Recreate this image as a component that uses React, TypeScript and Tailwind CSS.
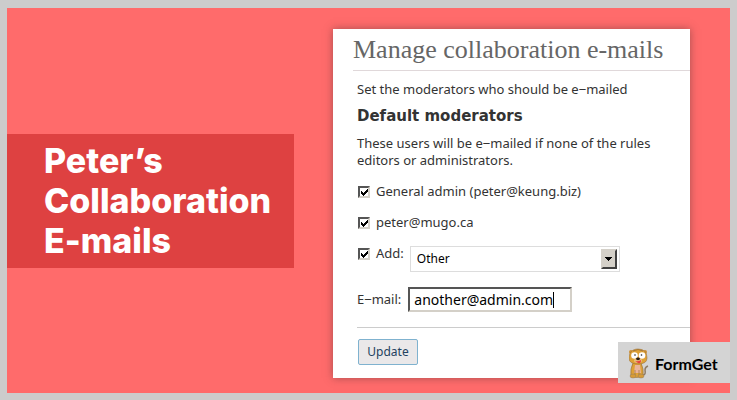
import { useState } from "react"

function Checkbox({ id }: { id: string }) {
  return (
    <span className="grid size-[12px] shrink-0">
      <input
        id={id}
        type="checkbox"
        defaultChecked
        className="peer col-start-1 row-start-1 size-[12px] appearance-none border-2 border-t-[#555] border-l-[#555] border-r-[#d4d0c8] border-b-[#d4d0c8] bg-white"
      />
      <svg
        viewBox="0 0 12 12"
        shapeRendering="crispEdges"
        className="pointer-events-none invisible col-start-1 row-start-1 size-[12px] peer-checked:visible"
      >
        <path
          d="M3 5h1v3h-1zM4 6h1v3h-1zM5 7h1v3h-1zM6 6h1v3h-1zM7 5h1v3h-1zM8 4h1v3h-1zM9 3h1v3h-1z"
          fill="#000"
        />
      </svg>
    </span>
  )
}

function Mascot() {
  return (
    <svg viewBox="0 0 20 32" className="h-[32px] w-[20px] shrink-0">
      <path d="M14 27q3 0 2-5q0-3 3-4" fill="none" stroke="#8f7c66" strokeWidth="1.500" />
      <path d="M4 15Q1 21 2 28q5 3 12 0q1-7-2-13z" fill="#dfa134" stroke="#9a7440" strokeWidth=".7" />
      <path d="M6 17h5l1 8H5z" fill="#eab49a" />
      <path d="M6 22v6M10 22v6" stroke="#9a7440" strokeWidth=".7" />
      <ellipse cx="4" cy="28" rx="3" ry="2" fill="#d79b36" stroke="#8f7c66" strokeWidth=".5" />
      <ellipse cx="12" cy="28" rx="3" ry="2" fill="#d79b36" stroke="#8f7c66" strokeWidth=".5" />
      <circle cx="2" cy="4" r="2" fill="#cf8e32" />
      <circle cx="16" cy="4" r="2" fill="#cf8e32" />
      <path d="M9 1C3 1 0 5 0 10q0 6 9 6T18 10q0-9-9-9z" fill="#dfa134" stroke="#9a7440" strokeWidth=".6" />
      <path d="M4 3q5-3 10 0" fill="none" stroke="#a87836" />
      <ellipse cx="5.500" cy="7.500" rx="3.300" ry="3.200" fill="#fff" />
      <ellipse cx="13" cy="7.500" rx="3.300" ry="3.200" fill="#fff" />
      <circle cx="6" cy="7" r=".8" fill="#222" />
      <circle cx="12.500" cy="7" r=".8" fill="#222" />
      <ellipse cx="9" cy="12.500" rx="4" ry="2.500" fill="#e9bd79" />
      <ellipse cx="9" cy="10.800" rx="2" ry="1.400" fill="#281b14" />
      <path d="M6 13q3 1 6-1q0 4-3 3z" fill="#e83f3f" />
    </svg>
  )
}

export default function App() {
  const [email, setEmail] = useState("another@admin.com")

  return (
    <div className="relative flex min-h-screen flex-col bg-[#ccc] px-[7px] pt-2 pb-[7px]">
      <main className="flex flex-1 items-start bg-[#ff6b6b] pt-[21px] pr-10 pb-[15px]">
        <div className="mr-[39px] mb-[6px] flex-1 self-center bg-[#de4141] py-[7px] pl-[37px]">
          <h1 className="font-['Inter',sans-serif] text-[34px] leading-[40px] font-extrabold text-white">
            Peter’s
            <br />
            Collaboration
            <br />
            E-mails
          </h1>
        </div>

        <form
          onSubmit={e => e.preventDefault()}
          className="w-[357px] bg-white pb-[13px] pl-5 font-['Noto_Sans',sans-serif] text-[13px] leading-[17px] text-[#333] shadow-[0_0_8px_rgba(80,50,50,0.5)]"
        >
          <h2 className="border-b border-[#e0d8da] font-['Liberation_Serif',serif] text-[26px] leading-[41px] text-[#666]">
            Manage collaboration e-mails
          </h2>

          <div className="pl-1">
            <p className="mt-[10px]">Set the moderators who should be e‒mailed</p>
            <h3 className="mt-2 font-['DejaVu_Sans',sans-serif] text-[15px] leading-5 font-bold">Default moderators</h3>
            <p className="mt-[9px]">
              These users will be e‒mailed if none of the rules
              <br />
              editors or administrators.
            </p>

            <div className="mt-[14px] flex items-center gap-[6px] pl-px">
              <Checkbox id="general" />
              <label htmlFor="general">General admin (peter@keung.biz)</label>
            </div>
            <div className="mt-[14px] flex items-center gap-[6px] pl-px">
              <Checkbox id="peter" />
              <label htmlFor="peter">peter@mugo.ca</label>
            </div>

            <div className="mt-[14px] flex items-start pl-px">
              <div className="flex items-center gap-[6px]">
                <Checkbox id="add" />
                <label htmlFor="add">Add:</label>
              </div>
              <div className="ml-[6px] grid w-[210px] items-center pt-px">
                <select
                  aria-label="Moderator to add"
                  className="col-start-1 row-start-1 h-[26px] w-full appearance-none border border-[#ddd] bg-white pl-[6px] text-xs text-black"
                >
                  <option>Other</option>
                </select>
                <span className="pointer-events-none col-start-1 row-start-1 mr-[3px] grid h-5 w-4 place-items-center justify-self-end border-2 border-t-[#d4d0c8] border-r-[#404040] border-b-[#404040] border-l-[#d4d0c8] bg-[#d4d0c8]">
                  <svg viewBox="0 0 7 4" shapeRendering="crispEdges" className="h-[4px] w-[7px]">
                    <path d="M0 0h7v1H0zM1 1h5v1H1zM2 2h3v1H2zM3 3h1v1H3z" />
                  </svg>
                </span>
              </div>
            </div>

            <div className="mt-[15px] flex items-center gap-[7px]">
              <label htmlFor="email">E‒mail:</label>
              <span className="flex h-[25px] w-[164px] items-center border-2 border-t-[#555] border-r-[#d4d0c8] border-b-[#d4d0c8] border-l-[#555] bg-white pl-1 text-sm text-black">
                <input
                  id="email"
                  value={email}
                  onChange={e => setEmail(e.target.value)}
                  className="field-sizing-content min-w-0 outline-none"
                />
                <span className="h-4 w-px bg-black" />
              </span>
            </div>

            <hr className="mt-[15px] border-[#ccc]" />
            <button className="mt-[11px] ml-px h-[26px] w-[60px] rounded-[2px] border border-[#7fb2cf] bg-[#eae8e9] text-xs text-[#23425f]">
              Update
            </button>
          </div>
        </form>
      </main>

      <a
        href="#"
        className="absolute right-[7px] bottom-[17px] flex h-[41px] w-[112px] items-center bg-[#d4d4d4] pt-[2px] pl-[11px]"
      >
        <Mascot />
        <span className="ml-[6px] font-['Lato',sans-serif] text-base leading-6 font-bold text-black">FormGet</span>
      </a>
    </div>
  )
}
